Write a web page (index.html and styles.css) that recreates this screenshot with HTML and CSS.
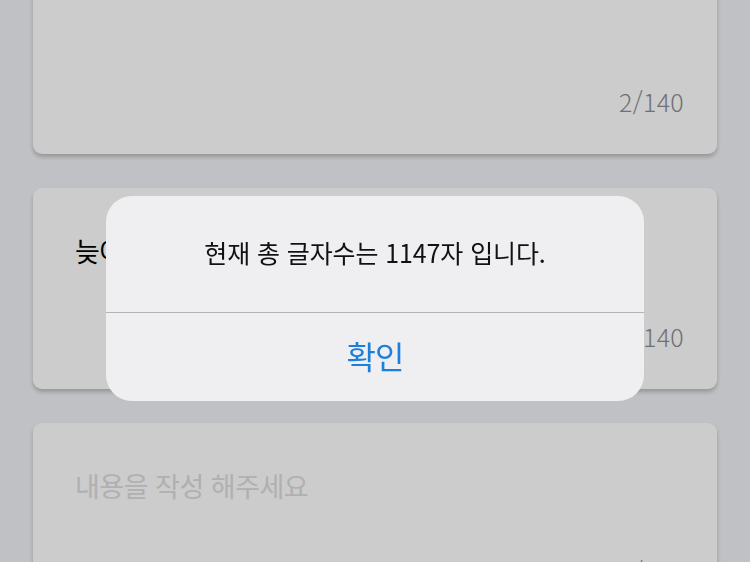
FILE: index.html
```html
<!DOCTYPE html>
<html lang="ko">
<head>
<meta charset="utf-8">
<title>글 작성</title>
<link rel="stylesheet" href="styles.css">
</head>
<body>
<main class="list">
  <section class="card card-first">
    <p class="content"></p>
    <div class="counter">2/140</div>
  </section>
  <section class="card">
    <p class="content">늦어요</p>
    <div class="counter">3/140</div>
  </section>
  <section class="card">
    <p class="content placeholder">내용을 작성 해주세요</p>
    <div class="counter">0/140</div>
  </section>
</main>
<div class="dim"></div>
<div class="alert" role="alertdialog">
  <div class="alert-message">현재 총 글자수는 1147자 입니다.</div>
  <button class="alert-button">확인</button>
</div>
</body>
</html>
```
FILE: styles.css
```css
html, body {
  margin: 0;
  padding: 0;
  height: 100%;
  overflow: hidden;
}
body {
  background: #f1f2f5;
  font-family: "Noto Sans CJK KR", "Noto Sans", sans-serif;
}
.list {
  display: flex;
  flex-direction: column;
  gap: 34px;
  padding: 0 33px;
  margin-top: -47px;
}
.card {
  background: #ffffff;
  border-radius: 9px;
  box-shadow: 0 3px 4px rgba(0, 0, 0, 0.22);
  height: 201px;
  box-sizing: border-box;
  padding: 40px 33px 0 42px;
  display: flex;
  flex-direction: column;
  justify-content: space-between;
}
.content {
  margin: 0;
  font-size: 27px;
  line-height: 46px;
  color: #000;
  letter-spacing: -0.5px;
}
.placeholder {
  color: #dcdcde;
}
.counter {
  align-self: flex-end;
  font-size: 25px;
  line-height: 30px;
  color: #8c8c90;
  font-weight: 300;
  letter-spacing: 0.3px;
  margin-bottom: 38px;
}
.dim {
  position: fixed;
  inset: 0;
  background: rgba(0, 0, 0, 0.2);
}
.alert {
  position: fixed;
  left: 106px;
  top: 196px;
  width: 538px;
  height: 205px;
  border-radius: 26px;
  background: #efeff1;
  display: flex;
  flex-direction: column;
  overflow: hidden;
}
.alert-message {
  height: 117px;
  box-sizing: border-box;
  border-bottom: 1px solid #b3b3b6;
  display: flex;
  align-items: center;
  justify-content: center;
  font-size: 25px;
  letter-spacing: -0.1px;
  color: #111;
  padding-bottom: 4px;
}
.alert-button {
  flex: 1;
  border: 0;
  background: transparent;
  font-family: inherit;
  font-size: 32px;
  color: #1b7fdb;
  letter-spacing: -1px;
  padding: 0 0 4px;
}
```
